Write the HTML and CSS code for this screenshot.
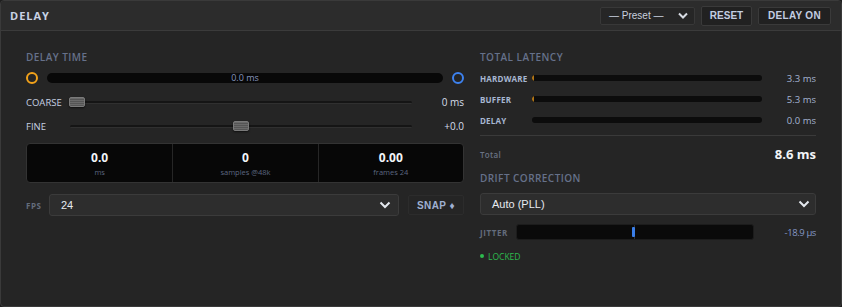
FILE: index.html
```html
<!DOCTYPE html>
<html>
<head>
<meta charset="utf-8">
<link rel="stylesheet" href="styles.css">
</head>
<body>
<div class="panel">
  <div class="header">
    <div class="title">DELAY</div>
    <div class="header-tools">
      <div class="preset">
        <span>— Preset —</span>
        <svg class="chev" width="10" height="7" viewBox="0 0 10 7"><path d="M1 1.5 L5 5.5 L9 1.5" fill="none" stroke="#d8dce4" stroke-width="2"/></svg>
      </div>
      <div class="btn reset">RESET</div>
      <div class="btn delayon">DELAY ON</div>
    </div>
  </div>
  <div class="body">
    <div class="col left">
      <div class="section-label">DELAY TIME</div>
      <div class="range-row">
        <span class="ring orange"></span>
        <div class="range-bar"><span>0.0 ms</span></div>
        <span class="ring blue"></span>
      </div>
      <div class="slider-row coarse">
        <span class="s-label">COARSE</span>
        <div class="track"><span class="thumb" style="left:0%"></span></div>
        <span class="s-value">0 ms</span>
      </div>
      <div class="slider-row fine">
        <span class="s-label">FINE</span>
        <div class="track"><span class="thumb" style="left:50%"></span></div>
        <span class="s-value">+0.0</span>
      </div>
      <div class="readout">
        <div class="cell"><div class="r-val">0.0</div><div class="r-lab">ms</div></div>
        <div class="cell"><div class="r-val">0</div><div class="r-lab">samples @48k</div></div>
        <div class="cell"><div class="r-val">0.00</div><div class="r-lab">frames 24</div></div>
      </div>
      <div class="fps-row">
        <span class="mini-label">FPS</span>
        <div class="select fps-select">
          <span>24</span>
          <svg class="chev" width="12" height="8" viewBox="0 0 12 8"><path d="M1.5 1.5 L6 6 L10.5 1.5" fill="none" stroke="#e4e8ee" stroke-width="2"/></svg>
        </div>
        <div class="btn snap">SNAP ♦</div>
      </div>
    </div>
    <div class="col right">
      <div class="section-label">TOTAL LATENCY</div>
      <div class="lat-rows">
        <div class="lat-row">
          <span class="lat-label">HARDWARE</span>
          <div class="lat-bar"><span class="lat-fill" style="width:2px"></span></div>
          <span class="lat-val">3.3 ms</span>
        </div>
        <div class="lat-row">
          <span class="lat-label">BUFFER</span>
          <div class="lat-bar"><span class="lat-fill" style="width:2px"></span></div>
          <span class="lat-val">5.3 ms</span>
        </div>
        <div class="lat-row">
          <span class="lat-label">DELAY</span>
          <div class="lat-bar"></div>
          <span class="lat-val">0.0 ms</span>
        </div>
      </div>
      <div class="divider"></div>
      <div class="total-row">
        <span class="total-label">Total</span>
        <span class="total-val">8.6 ms</span>
      </div>
      <div class="section-label drift">DRIFT CORRECTION</div>
      <div class="select drift-select">
        <span>Auto (PLL)</span>
        <svg class="chev" width="12" height="8" viewBox="0 0 12 8"><path d="M1.5 1.5 L6 6 L10.5 1.5" fill="none" stroke="#e4e8ee" stroke-width="2"/></svg>
      </div>
      <div class="jitter-row">
        <span class="mini-label jl">JITTER</span>
        <div class="jitter-bar"><span class="center-line"></span><span class="marker"></span></div>
        <span class="jitter-val">-18.9 µs</span>
      </div>
      <div class="locked"><span class="dot"></span>LOCKED</div>
    </div>
  </div>
</div>
</body>
</html>
```

FILE: styles.css
```css
* { box-sizing: border-box; }
html, body { margin: 0; padding: 0; background: #1e1e1e; }
body { width: 842px; height: 307px; font-family: "Open Sans", "Liberation Sans", sans-serif; }

.panel {
  width: 842px; height: 307px;
  background: #252525;
  border: 1px solid #3a3a3a;
  border-radius: 4px;
  overflow: hidden;
}

.header {
  height: 30px;
  background: #2c2c2c;
  border-bottom: 1px solid #3b3b3b;
  display: flex; align-items: center; justify-content: space-between;
  padding: 0 10px 0 9px;
}
.title { font-size: 11px; font-weight: 700; letter-spacing: 1px; color: #c9d2e4; }
.header-tools { display: flex; align-items: center; gap: 6px; }
.preset {
  width: 95px; height: 18px;
  background: #262626; border: 1px solid #383838; border-radius: 2px;
  display: flex; align-items: center; justify-content: space-between;
  padding: 0 6px 0 8px;
  font-family: "Liberation Sans", Arial, sans-serif; font-size: 10px; color: #c8d0de;
}
.btn {
  background: #212121; border: 1px solid #3a3a3a; border-radius: 2px;
  font-family: "Liberation Sans", Arial, sans-serif; font-weight: 700; font-size: 10px;
  color: #c3cee2; display: flex; align-items: center; justify-content: center;
}
.reset { width: 51px; height: 20px; }
.delayon { width: 73px; height: 18px; letter-spacing: 0.3px; }

.body { display: flex; padding: 20px 25px 0 25px; gap: 16px; }
.col { display: flex; flex-direction: column; }
.left { width: 438px; }
.right { width: 337px; }

.section-label {
  height: 12px; line-height: 12px;
  font-size: 10px; font-weight: 600; letter-spacing: 0.45px; color: #66718a;
}

.range-row { margin-top: 9px; height: 12px; display: flex; align-items: center; gap: 9px; }
.ring { width: 12px; height: 12px; border-radius: 50%; border: 2px solid; flex: none; }
.ring.orange { border-color: #f2a21a; }
.ring.blue { border-color: #3d82f0; }
.range-bar {
  flex: 1; height: 10px; background: #080808; border-radius: 5px;
  display: flex; align-items: center; justify-content: center;
  font-size: 9px; color: #8596bf; line-height: 10px;
}

.slider-row { height: 14px; display: flex; align-items: center; }
.coarse { margin-top: 11px; }
.fine { margin-top: 10px; }
.s-label { width: 44px; font-size: 9.5px; color: #c6d0e2; }
.track { position: relative; width: 342px; height: 3px; background: #151515; border-radius: 2px; border-bottom: 1px solid #303030; }
.thumb {
  position: absolute; top: -4px; width: 16px; height: 10px; margin-left: -1px;
  border-radius: 2px; border: 1px solid #7a7a7a;
  background: repeating-linear-gradient(180deg, #6a6a6a 0 1px, #555 1px 2px);
  box-shadow: 0 1px 2px rgba(0,0,0,0.6);
}
.fine .thumb { margin-left: -8px; }
.s-value { flex: 1; text-align: right; font-size: 10px; color: #d6deea; }

.readout {
  margin-top: 10px; height: 40px;
  background: #070707; border: 1px solid #333; border-radius: 4px;
  display: grid; grid-template-columns: 1fr 1fr 1fr;
}
.cell { display: flex; flex-direction: column; align-items: center; padding-top: 6px; }
.cell + .cell { border-left: 1px solid #262626; }
.r-val { font-size: 12px; font-weight: 700; color: #f1f4f8; line-height: 16px; }
.r-lab { font-size: 7.5px; color: #5c6680; line-height: 12px; }

.fps-row { margin-top: 11px; height: 22px; display: flex; align-items: center; }
.mini-label { font-size: 8px; font-weight: 700; letter-spacing: 0.6px; color: #636c7c; }
.fps-row .mini-label { width: 23px; }
.select {
  height: 22px; background: #2d2d2d; border: 1px solid #3b3b3b; border-radius: 3px;
  display: flex; align-items: center; justify-content: space-between;
  font-family: "Liberation Sans", Arial, sans-serif; font-size: 11px; color: #e6eaf0;
}
.fps-select { width: 350px; padding: 0 7px 0 11px; }
.snap { margin-left: 9px; width: 56px; height: 20px; background: #252525; border-color: #2c2c2c; color: #9fb0d2; letter-spacing: 0.4px; }

.lat-rows { margin-top: 9px; display: flex; flex-direction: column; gap: 9px; }
.lat-row { height: 12px; display: flex; align-items: center; }
.lat-label { width: 52px; font-size: 8px; font-weight: 700; color: #a7b7d2; letter-spacing: 0.2px; }
.lat-bar { width: 230px; height: 6px; background: #0c0c0c; border-radius: 3px; overflow: hidden; display: flex; }
.lat-fill { height: 6px; background: #b07416; border-radius: 3px 0 0 3px; }
.lat-val { flex: 1; text-align: right; font-size: 9.5px; color: #a4b4d2; }

.divider { margin-top: 9px; height: 1px; background: #3a3a3a; }
.total-row { margin-top: 10px; height: 16px; display: flex; align-items: center; justify-content: space-between; }
.total-label { font-size: 8px; font-weight: 600; color: #6a7384; letter-spacing: 0.3px; }
.total-val { font-size: 13px; font-weight: 700; color: #f2f4f7; }
.drift { margin-top: 10px; }
.drift-select { margin-top: 9px; padding: 0 5px 0 11px; }

.jitter-row { margin-top: 9px; height: 16px; display: flex; align-items: center; }
.jl { width: 36px; }
.jitter-bar { position: relative; width: 238px; height: 16px; background: #0a0a0a; border: 1px solid #1c1c1c; border-radius: 3px; }
.center-line { position: absolute; left: 117px; top: 0; bottom: 0; width: 1px; background: #2e2e2e; }
.marker { position: absolute; left: 115px; top: 2px; width: 3px; height: 10px; background: #3a7ee8; border-radius: 1px; }
.jitter-val { flex: 1; text-align: right; font-size: 9.5px; color: #8496c4; letter-spacing: -0.4px; }

.locked { margin-top: 10px; height: 12px; display: flex; align-items: center; gap: 4px; font-size: 8.5px; color: #2dbb4e; }
.dot { width: 4px; height: 4px; border-radius: 50%; background: #2dbb4e; }
```
